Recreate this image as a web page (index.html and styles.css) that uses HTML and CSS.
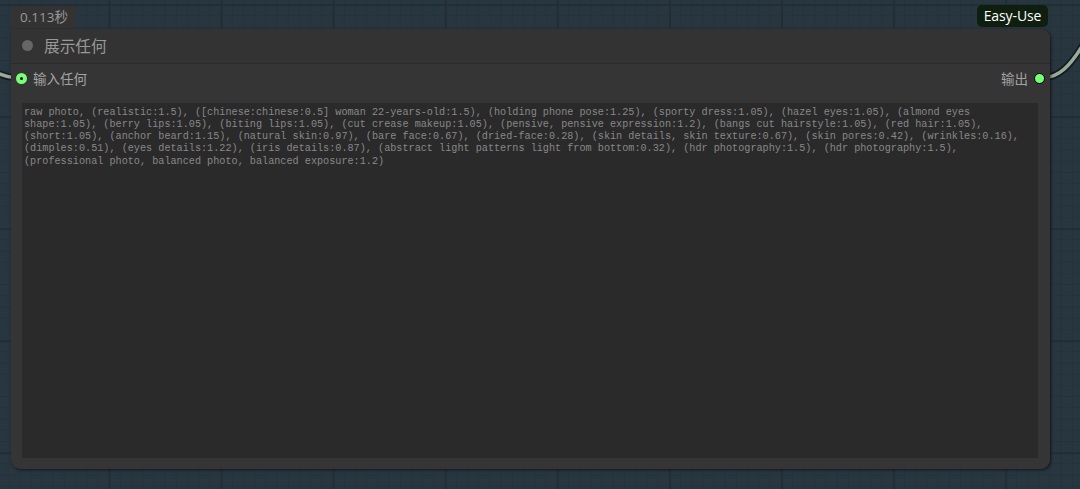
FILE: index.html
```html
<!DOCTYPE html>
<html lang="zh-CN">
<head>
    <meta charset="UTF-8">
    <meta name="viewport" content="width=device-width, initial-scale=1.0">
    <title>展示任何</title>
    <link rel="stylesheet" href="styles.css">
</head>
<body>
    <div class="canvas">
        <svg class="links" width="1080" height="489" viewBox="0 0 1080 489">
            <path class="link-border" d="M-4 72.5 C2 75 6 77 14 77.5"/>
            <path class="link" d="M-4 72.5 C2 75 6 77 14 77.5"/>
            <path class="link-border" d="M1044 77.5 C1058 77.5 1070 67 1084 43"/>
            <path class="link" d="M1044 77.5 C1058 77.5 1070 67 1084 43"/>
        </svg>

        <div class="badges">
            <span class="badge time">0.113秒</span>
            <span class="badge pack">Easy-Use</span>
        </div>

        <div class="node">
            <div class="node-title">
                <span class="collapse-dot"></span>
                <span>展示任何</span>
            </div>
            <div class="slots">
                <div class="slot">
                    <span class="port port-in"></span>
                    <span>输入任何</span>
                </div>
                <div class="slot">
                    <span>输出</span>
                    <span class="port port-out"></span>
                </div>
            </div>
            <div class="text-widget">raw photo, (realistic:1.5), ([chinese:chinese:0.5] woman 22-years-old:1.5), (holding phone pose:1.25), (sporty dress:1.05), (hazel eyes:1.05), (almond eyes
shape:1.05), (berry lips:1.05), (biting lips:1.05), (cut crease makeup:1.05), (pensive, pensive expression:1.2), (bangs cut hairstyle:1.05), (red hair:1.05),
(short:1.05), (anchor beard:1.15), (natural skin:0.97), (bare face:0.67), (dried-face:0.28), (skin details, skin texture:0.67), (skin pores:0.42), (wrinkles:0.16),
(dimples:0.51), (eyes details:1.22), (iris details:0.87), (abstract light patterns light from bottom:0.32), (hdr photography:1.5), (hdr photography:1.5),
(professional photo, balanced photo, balanced exposure:1.2)</div>
        </div>
    </div>
</body>
</html>
```
FILE: styles.css
```css
* {
    box-sizing: border-box;
}

body {
    margin: 0;
    overflow: hidden;
    font-family: "Open Sans", "Noto Sans CJK SC", sans-serif;
    color: #999;
}

/* graph background: 11.2px cells, a darker line every 10 */
.canvas {
    position: relative;
    height: 489px;
    padding: 5px 30px 0 11px;
    background-color: #283640;
    background-image:
        linear-gradient(90deg, #222e36 2px, transparent 2px),
        linear-gradient(#222e36 2px, transparent 2px),
        linear-gradient(90deg, #25323b 1px, transparent 1px),
        linear-gradient(#25323b 1px, transparent 1px);
    background-size: 112.1px 112.1px, 112.1px 112.1px, 11.21px 11.21px, 11.21px 11.21px;
    background-position: 108.5px 0, 0 4px, 108.5px 0, 0 4px;
}

.links {
    position: absolute;
    top: 0;
    left: 0;
}

.link,
.link-border {
    fill: none;
}

.link {
    stroke: #9aaa9a;
    stroke-width: 3.6;
}

.link-border {
    stroke: #151c20;
    stroke-width: 7;
}

.badges {
    position: relative;
    display: flex;
    justify-content: space-between;
    height: 24px;
    padding-right: 2px;
}

.badge {
    white-space: nowrap;
}

.time {
    height: 26px;
    width: 65px;
    padding-left: 9px;
    margin-top: 1px;
    border-radius: 5px 5px 0 0;
    background-color: #333;
    font-size: 13.5px;
    line-height: 23px;
}

.pack {
    width: 71px;
    height: 22px;
    border-radius: 5px;
    background-color: #0f1f0f;
    color: #fff;
    font-size: 14px;
    letter-spacing: -0.1px;
    line-height: 21px;
    text-align: center;
}

.node {
    position: relative;
    display: flex;
    flex-direction: column;
    height: 440px;
    border-radius: 0 9px 9px 9px;
    background-color: #353535;
    box-shadow: 1px 1px 3px rgba(0, 0, 0, 0.6);
}

.node-title {
    display: flex;
    align-items: center;
    gap: 11px;
    height: 35px;
    padding: 0 0 2px 11px;
    border-bottom: 1px solid #2b2b2b;
    border-radius: 0 9px 0 0;
    background-color: #333;
    font-size: 15.7px;
}

.collapse-dot {
    width: 11px;
    height: 11px;
    border-radius: 50%;
    background-color: #666;
}

.slots {
    display: flex;
    justify-content: space-between;
    height: 39px;
    padding: 3px 5px 0;
}

.slot {
    display: flex;
    align-items: center;
    gap: 6px;
    height: 22px;
    font-size: 13.5px;
    color: #a2a2a2;
}

.port {
    width: 11px;
    height: 11px;
    border-radius: 50%;
}

.port-in {
    border: 4px solid #7f7;
    background-color: #111;
}

.port-out {
    border: 1px solid #000;
    background-color: #7f7;
}

.text-widget {
    height: 355px;
    margin: 0 12px 0 11px;
    padding: 4px 2px;
    background-color: #2a2a2a;
    color: #888;
    font-family: "Liberation Mono", monospace;
    font-size: 10.19px;
    line-height: 12.15px;
    white-space: pre;
}
```
